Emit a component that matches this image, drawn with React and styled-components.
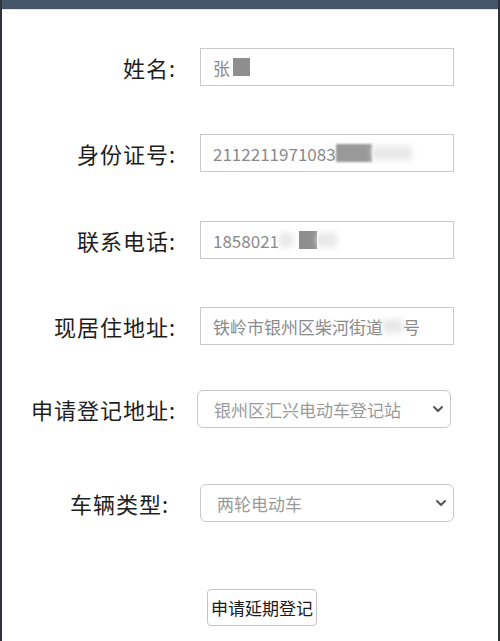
import React from "react";
import styled, { createGlobalStyle } from "styled-components";
import { ChevronDown } from "lucide-react";

const GlobalStyle = createGlobalStyle`
  html, body {
    margin: 0;
    padding: 0;
    background: #ffffff;
  }
  body {
    font-family: "Noto Sans CJK SC", "Noto Sans", sans-serif;
  }
`;

const Frame = styled.div`
  width: 500px;
  height: 641px;
  box-sizing: border-box;
  border-left: 2px solid #2f3338;
  border-right: 2px solid #2f3338;
  background: #ffffff;
  overflow: hidden;
`;

const TopBar = styled.div`
  height: 9px;
  background: #46566a;
  border-bottom: 1px solid #dfe6ec;
`;

const Form = styled.form`
  display: flex;
  flex-direction: column;
  padding-top: 38px;
`;

const Row = styled.div`
  display: flex;
  align-items: center;
  height: 38px;
  margin-top: ${(p) => p.$gap || 0}px;
`;

const Label = styled.label`
  width: ${(p) => 174 - (p.$shift || 0)}px;
  margin-right: ${(p) => 24 + (p.$shift || 0) + (p.$fieldShift || 0)}px;
  text-align: right;
  font-size: 22px;
  letter-spacing: 1px;
  color: #1e1e1e;
  white-space: nowrap;
`;

const Field = styled.div`
  position: relative;
  box-sizing: border-box;
  width: 254px;
  height: 38px;
  border: 1px solid #c9c9c9;
  border-radius: ${(p) => (p.$select ? "6px" : "0")};
  display: flex;
  align-items: center;
  padding-left: ${(p) => (p.$select ? 16 : 12)}px;
  font-size: 17px;
  color: ${(p) => (p.$select ? "#9a9a9a" : "#8a8a8a")};
  white-space: nowrap;
  overflow: hidden;
`;

const Masked = styled.span`
  display: inline-block;
  width: ${(p) => p.$w}px;
  height: 18px;
  margin-left: ${(p) => p.$ml || 0}px;
  background: ${(p) => p.$color || "#8e8e8e"};
  filter: blur(${(p) => p.$blur || 0.6}px);
`;

const Smear = styled.span`
  display: inline-block;
  width: ${(p) => p.$w}px;
  height: 14px;
  background: #e8e8e8;
  filter: blur(3px);
`;

const Arrow = styled(ChevronDown)`
  position: absolute;
  right: 4px;
  top: 50%;
  transform: translateY(-50%);
  color: #555;
`;

const Footer = styled.div`
  display: flex;
  justify-content: center;
  margin-top: 67px;
  padding-left: 24px;
`;

const Button = styled.button`
  box-sizing: border-box;
  width: 110px;
  height: 37px;
  background: #ffffff;
  border: 1px solid #c4c4c4;
  border-radius: 4px;
  font-family: "Noto Sans CJK SC", "Noto Sans", sans-serif;
  font-size: 17px;
  color: #1a1a1a;
  padding: 0;
`;

export default function App() {
  return (
    <>
      <GlobalStyle />
      <Frame>
        <TopBar />
        <Form onSubmit={(e) => e.preventDefault()}>
          <Row>
            <Label>姓名:</Label>
            <Field>
              张<Masked $w={17} $ml={3} />
            </Field>
          </Row>
          <Row $gap={48}>
            <Label>身份证号:</Label>
            <Field>
              2112211971083
              <Masked $w={36} $blur={1.2} $color="#999" />
              <Smear $w={40} />
            </Field>
          </Row>
          <Row $gap={49}>
            <Label>联系电话:</Label>
            <Field>
              1858021
              <Smear $w={14} />
              <Masked $w={18} $ml={6} />
              <Smear $w={20} />
            </Field>
          </Row>
          <Row $gap={48}>
            <Label>现居住地址:</Label>
            <Field>
              铁岭市银州区柴河街道
              <Smear $w={20} />号
            </Field>
          </Row>
          <Row $gap={45}>
            <Label $fieldShift={-3}>申请登记地址:</Label>
            <Field $select>
              银州区汇兴电动车登记站
              <Arrow size={16} strokeWidth={3} />
            </Field>
          </Row>
          <Row $gap={56}>
            <Label $shift={7}>车辆类型:</Label>
            <Field $select>
              两轮电动车
              <Arrow size={16} strokeWidth={3} />
            </Field>
          </Row>
          <Footer>
            <Button type="button">申请延期登记</Button>
          </Footer>
        </Form>
      </Frame>
    </>
  );
}
